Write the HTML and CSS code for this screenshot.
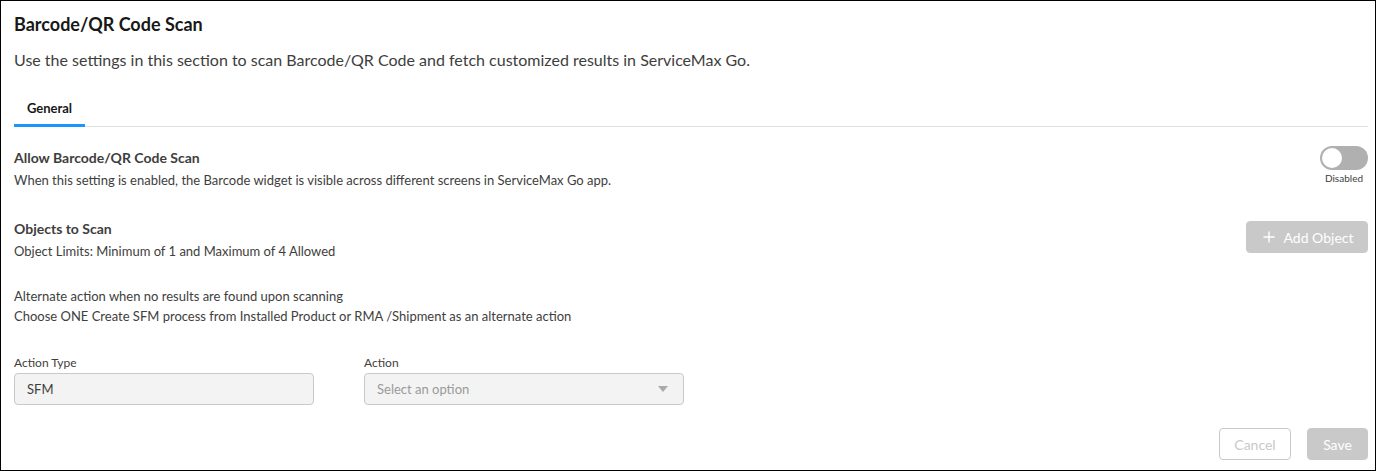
FILE: index.html
```html
<!DOCTYPE html>
<html>
<head>
<meta charset="utf-8">
<link rel="stylesheet" href="styles.css">
</head>
<body>
<div class="page">
  <h1 class="title">Barcode/QR Code Scan</h1>
  <p class="subtitle">Use the settings in this section to scan Barcode/QR Code and fetch customized results in ServiceMax Go.</p>
  <div class="tabs">
    <div class="tab active">General</div>
  </div>

  <div class="row row-allow">
    <div class="info info-allow">
      <div class="heading">Allow Barcode/QR Code Scan</div>
      <div class="desc">When this setting is enabled, the Barcode widget is visible across different screens in ServiceMax Go app.</div>
    </div>
    <div class="toggle-wrap">
      <div class="toggle"><span class="knob"></span></div>
      <div class="toggle-label">Disabled</div>
    </div>
  </div>

  <div class="row row-objects">
    <div class="info">
      <div class="heading">Objects to Scan</div>
      <div class="desc">Object Limits: Minimum of 1 and Maximum of 4 Allowed</div>
    </div>
    <button class="btn btn-add" type="button">
      <svg class="plus" width="12" height="12" viewBox="0 0 12 12"><path d="M6 0.5V11.5M0.5 6H11.5" stroke="#fff" stroke-width="1.4" fill="none"/></svg>
      <span>Add Object</span>
    </button>
  </div>

  <div class="alt">
    <div class="desc">Alternate action when no results are found upon scanning</div>
    <div class="desc">Choose ONE Create SFM process from Installed Product or RMA /Shipment as an alternate action</div>
  </div>

  <div class="fields">
    <div class="field field-type">
      <div class="label">Action Type</div>
      <div class="input">SFM</div>
    </div>
    <div class="field field-action">
      <div class="label">Action</div>
      <div class="input select"><span class="placeholder">Select an option</span><span class="caret"></span></div>
    </div>
  </div>

  <div class="footer">
    <button class="btn btn-cancel" type="button">Cancel</button>
    <button class="btn btn-save" type="button">Save</button>
  </div>
</div>
</body>
</html>
```

FILE: styles.css
```css
* { box-sizing: border-box; }
html, body { margin: 0; padding: 0; background: #fff; }
body { font-family: "Lato", "Open Sans", sans-serif; color: #3e3e3c; }

.page {
  width: 1376px;
  height: 471px;
  border: 1px solid #000;
  padding: 11px 7px 0 13px;
  display: flex;
  flex-direction: column;
}

.title {
  margin: 0;
  font-size: 18px;
  line-height: 24px;
  font-weight: 700;
  color: #181818;
}

.subtitle {
  margin: 12px 0 0;
  font-size: 16px;
  line-height: 24px;
  color: #3e3e3c;
}

.tabs {
  margin-top: 26px;
  display: flex;
  border-bottom: 1px solid #e0e0e0;
}
.tab {
  width: 71px;
  text-align: center;
  font-size: 13px;
  font-weight: 700;
  line-height: 20px;
  padding-bottom: 6px;
  color: #181818;
  border-bottom: 3px solid transparent;
  margin-bottom: -1px;
}
.tab.active { border-bottom-color: #1b96ff; }

.row {
  display: flex;
  justify-content: space-between;
  align-items: flex-start;
}
.row-allow { margin-top: 19px; }
.info-allow { padding-top: 2px; }
.row-objects { margin-top: 29px; }

.heading {
  font-size: 14px;
  font-weight: 700;
  line-height: 20px;
  color: #3e3e3c;
}
.desc {
  font-size: 13px;
  line-height: 20px;
  color: #3e3e3c;
}
.heading + .desc { margin-top: 2px; }

.toggle-wrap {
  display: flex;
  flex-direction: column;
  align-items: center;
  width: 48px;
}
.toggle {
  width: 48px;
  height: 24px;
  border-radius: 12px;
  background: #b0b0b0;
  padding: 2px;
}
.knob {
  display: block;
  width: 20px;
  height: 20px;
  border-radius: 50%;
  background: #fff;
}
.toggle-label {
  margin-top: 2px;
  font-size: 10px;
  line-height: 12px;
  color: #3e3e3c;
  white-space: nowrap;
}

.btn {
  font-family: inherit;
  font-size: 14px;
  border-radius: 4px;
  height: 32px;
  cursor: default;
}
.btn-add {
  margin-top: 2px;
  width: 122px;
  display: flex;
  align-items: center;
  justify-content: center;
  gap: 9px;
  background: #c9c9c9;
  border: 1px solid #c9c9c9;
  color: #fff;
  padding: 0 0 0 2px;
}
.plus { display: block; }

.alt { margin-top: 25px; }

.fields {
  margin-top: 29px;
  display: flex;
  gap: 50px;
}
.label {
  font-size: 12px;
  line-height: 16px;
  color: #3e3e3c;
  margin-bottom: 2px;
}
.field-type .input { width: 300px; }
.field-action .input { width: 320px; }
.input {
  height: 32px;
  background: #f3f3f3;
  border: 1px solid #c9c9c9;
  border-radius: 4px;
  padding: 0 12px;
  display: flex;
  align-items: center;
  font-size: 13px;
  color: #3e3e3c;
}
.select { justify-content: space-between; }
.placeholder { color: #9a9a9a; }
.caret {
  width: 0;
  height: 0;
  border-left: 5px solid transparent;
  border-right: 5px solid transparent;
  border-top: 6px solid #aaaaaa;
  margin-right: 3px;
}

.footer {
  margin-top: 23px;
  display: flex;
  justify-content: flex-end;
  gap: 16px;
}
.btn-cancel {
  width: 72px;
  background: #fff;
  border: 1px solid #c9c9c9;
  color: #c9c9c9;
}
.btn-save {
  width: 61px;
  background: #c9c9c9;
  border: 1px solid #c9c9c9;
  color: #fff;
}
```
